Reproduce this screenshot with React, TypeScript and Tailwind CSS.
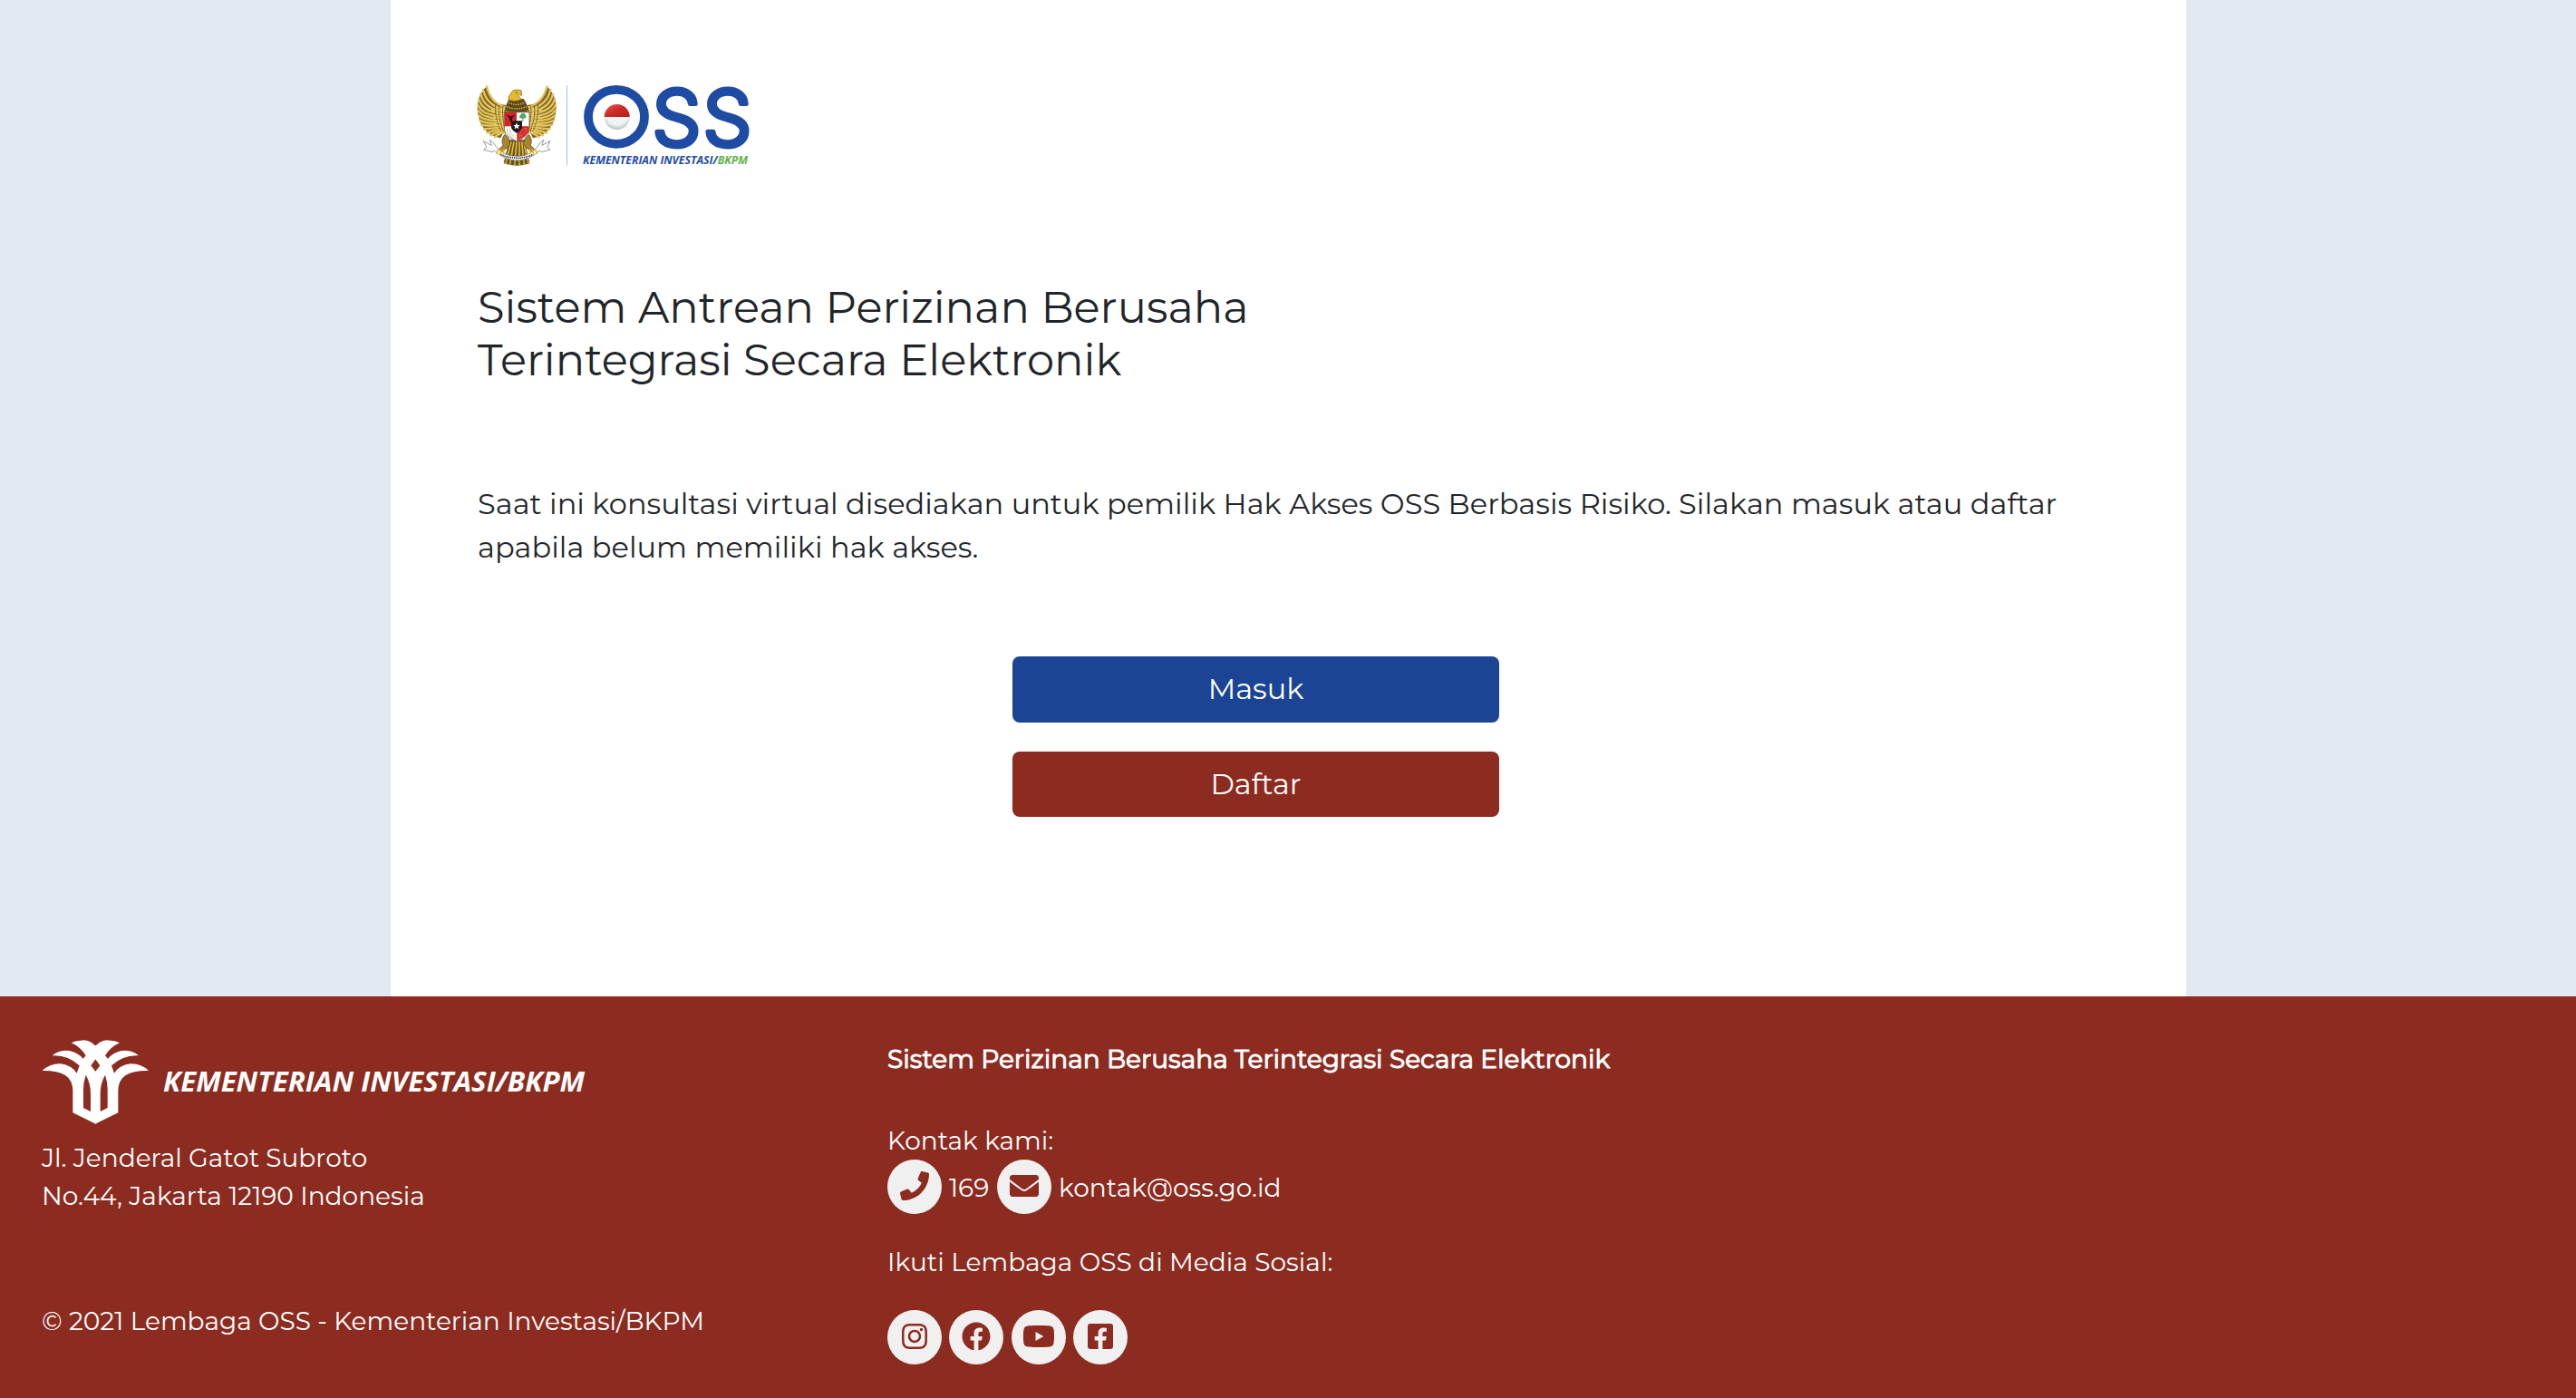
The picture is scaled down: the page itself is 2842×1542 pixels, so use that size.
import type { ReactNode } from "react";
import {
  FaEnvelope,
  FaFacebook,
  FaFacebookSquare,
  FaInstagram,
  FaPhone,
  FaYoutube,
} from "react-icons/fa";

const FEATHERS: [number, number, number, number][] = [
  // tip x, tip y, control x, control y
  [66, 31, 78, 84],
  [54, 42, 66, 96],
  [46, 56, 58, 108],
  [40, 74, 54, 120],
  [37, 92, 54, 132],
  [37, 110, 58, 142],
  [39, 127, 64, 150],
  [43, 143, 70, 158],
  [48, 158, 78, 164],
  [57, 172, 86, 170],
  [67, 184, 94, 176],
  [79, 193, 100, 180],
  [92, 199, 108, 184],
];

function Wing() {
  return (
    <g strokeLinecap="round" fill="none">
      <path
        d="M66 31C40 54 30 90 38 126C46 172 78 196 112 202L134 160L130 92C112 94 80 82 66 31Z"
        fill="#7d682c"
      />
      {FEATHERS.map(([x, y, cx, cy], i) => (
        <path
          key={i}
          d={`M${x} ${y}Q${cx} ${cy} ${126 + (i % 2)} ${100 + i * 7}`}
          stroke="#e6c558"
          strokeWidth="7"
        />
      ))}
      <path d="M88 92Q104 110 124 112M84 108Q100 124 122 124M84 124Q100 138 120 138M88 140Q104 152 124 150M94 156Q108 166 126 162" stroke="#ecd069" strokeWidth="4" />
      <path d="M96 88Q90 128 112 178M108 94Q102 130 122 182M120 96Q114 130 130 184" stroke="#5c4c20" strokeWidth="3" strokeDasharray="3 4" />
    </g>
  );
}

function Garuda() {
  return (
    <g transform="translate(515 85) scale(0.33333)">
      <Wing />
      <g transform="translate(331 0) scale(-1 1)">
        <Wing />
      </g>
      {/* tail */}
      <path d="M140 208L192 208L208 286Q166 300 122 286Z" fill="#6b5620" />
      <path d="M147 214L128 288M156 214L142 291M165 214L158 293M174 214L174 293M182 214L190 291M188 214L204 286" stroke="#e0b83e" strokeWidth="5" />
      <path d="M126 262Q166 276 204 262M122 276Q166 290 208 276" stroke="#4a3b17" strokeWidth="2.5" fill="none" strokeDasharray="3 3" />
      {/* legs */}
      <path d="M126 190Q146 206 142 226L116 248L102 244L120 226Q112 206 126 190Z" fill="#a9862d" stroke="#4a3b17" strokeWidth="2" />
      <path d="M205 190Q185 206 189 226L215 248L229 244L211 226Q219 206 205 190Z" fill="#a9862d" stroke="#4a3b17" strokeWidth="2" />
      {/* breast and head */}
      <path d="M140 72Q126 98 122 128L208 128Q206 98 188 72Z" fill="#5e4b1d" />
      <path d="M138 84Q164 98 192 84M132 98Q164 112 198 98M128 112Q164 124 204 112" stroke="#d9b23b" strokeWidth="4" fill="none" strokeDasharray="5 3" />
      <path d="M138 76Q136 64 144 58Q148 44 162 42L180 44Q184 52 180 62L176 56L170 60Q176 70 182 74Q160 84 138 76Z" fill="#e8b92a" stroke="#6b5620" strokeWidth="2" />
      <circle cx="164" cy="52" r="2.2" fill="#3b2c10" />
      {/* shield */}
      <path d="M124 116H207V172Q206 196 165.500 213Q125 196 124 172Z" fill="#fff" stroke="#333" strokeWidth="2" />
      <path d="M125 117H165V163H125Z" fill="#d8232a" />
      <path d="M166 163H206V172Q204 195 166 211Z" fill="#d8232a" />
      <path d="M134 124Q134 134 141 134Q142 148 146 150Q150 148 151 134Q157 134 158 124Q154 130 146 130Q138 130 134 124Z" fill="#33150f" />
      <path d="M176 136a7 7 0 0 1 2 -11a8 6 0 0 1 16 1a6 6 0 0 1 0 10l-7 1v11h-3v-11Z" fill="#4eaa5c" />
      <path d="M133 170Q134 190 154 202M142 172Q142 186 156 196" stroke="#9ba552" strokeWidth="3" fill="none" strokeDasharray="4 2" />
      <path d="M174 198Q176 176 198 168Q198 186 174 198Z" fill="none" stroke="#e8793c" strokeWidth="2.500" />
      <path d="M147 145H183V166Q181 178 165 185Q149 178 147 166Z" fill="#1c1c1e" />
      <path d="M165 151l3.200 8h8.300l-6.600 5.200l2.500 8.300l-7.400 -5l-7.400 5l2.500 -8.300l-6.600 -5.200h8.300Z" fill="#fff" />
      {/* ribbon */}
      <path d="M55 212L82 226L76 208Q90 216 98 232Q128 264 166 262Q204 264 233 232Q241 216 254 208L249 226L276 212L266 232L276 240L248 248L240 244Q206 276 166 276Q126 276 92 244L84 248L56 240L66 232Z" fill="#fff" stroke="#666" strokeWidth="2" />
      <path d="M112 256Q166 280 220 256" stroke="#333" strokeWidth="5" strokeDasharray="4 2.500" fill="none" />
      {/* claws */}
      <path d="M106 238L98 252M114 242L110 256M122 240L122 254M225 238L233 252M217 242L221 256M209 240L209 254" stroke="#e6b62c" strokeWidth="5" strokeLinecap="round" />
    </g>
  );
}

function OssLogo() {
  return (
    <svg viewBox="527 90 308 96" className="block h-[96px] w-[308px] overflow-visible" role="img">
      <defs>
        <linearGradient id="ballRed" x1="0" y1="0" x2="1" y2="1">
          <stop offset="0" stopColor="#e05a50" />
          <stop offset="0.5" stopColor="#cb2a26" />
          <stop offset="1" stopColor="#b31f1f" />
        </linearGradient>
        <radialGradient id="ballWhite" cx="0.5" cy="0.35" r="0.65">
          <stop offset="0.7" stopColor="#f1f4f4" />
          <stop offset="1" stopColor="#b9bfc0" />
        </radialGradient>
      </defs>
      <Garuda />
      <path d="M625.500 94V182.500" stroke="#a9bfdc" strokeWidth="1" />
      <ellipse cx="680" cy="128.800" rx="31" ry="30" fill="none" stroke="#1f4ca3" strokeWidth="9.800" />
      <circle cx="680.700" cy="129" r="14" fill="url(#ballWhite)" />
      <path d="M666.700 129a14 14 0 0 1 28 0Z" fill="url(#ballRed)" />
      <g
        fill="#1f4ca3"
        stroke="#1f4ca3"
        strokeWidth="5"
        strokeLinejoin="round"
        className="font-['Inter'] text-[85px] font-light"
      >
        <text x="719.500" y="160.500" textLength="54" lengthAdjust="spacingAndGlyphs">S</text>
        <text x="775.500" y="160.500" textLength="54" lengthAdjust="spacingAndGlyphs">S</text>
      </g>
      <text
        x="643"
        y="181"
        textLength="182"
        lengthAdjust="spacingAndGlyphs"
        fill="#1f4ca3"
        className="font-['Open_Sans'] text-[12px] font-bold italic"
      >
        KEMENTERIAN INVESTASI/<tspan fill="#62b34b">BKPM</tspan>
      </text>
    </svg>
  );
}

function PalmHalf() {
  return (
    <path d="M197 41L182 29Q166 18 146 23Q128 23 116 31Q146 44 164 73L155 83Q136 62 110 57Q76 54 53 73Q104 70 143 106L134 131Q116 105 82 100Q46 98 20 123Q70 122 96 138Q121 154 121 190V262L197 299V127L181 106L197 84ZM164 137Q180 164 180 200V258L156 246V185Q156 160 164 137Z" />
  );
}

function MinistryLogo() {
  return (
    <svg viewBox="46 1146 606 95" className="block h-[95px] w-[606px]" role="img">
      <g transform="translate(40 1140) scale(0.33333)" fill="#fff" fillRule="evenodd">
        <PalmHalf />
        <g transform="translate(392 0) scale(-1 1)">
          <PalmHalf />
        </g>
      </g>
      <text
        x="180"
        y="1203.500"
        textLength="465"
        lengthAdjust="spacingAndGlyphs"
        fill="#fff"
        className="font-['Open_Sans'] text-[30px] font-bold italic"
      >
        KEMENTERIAN INVESTASI/BKPM
      </text>
    </svg>
  );
}

function Disc({ children }: { children: ReactNode }) {
  return (
    <span className="flex size-[60px] shrink-0 items-center justify-center rounded-full bg-[#f0f0f0] pb-[2px] text-[#8c2b20]">
      {children}
    </span>
  );
}

export default function App() {
  return (
    <div className="flex h-[1542px] w-[2842px] flex-col overflow-hidden bg-[#e2e9f1] font-['Montserrat','Inter',sans-serif] font-normal text-[#212529]">
      <main className="ml-[431px] h-[1099px] w-[1981px] bg-white pt-[90px] pl-[96px]">
        <OssLogo />
        <h1 className="mt-[124px] text-[48px] leading-[58px] whitespace-nowrap">
          Sistem Antrean Perizinan Berusaha
          <br />
          Terintegrasi Secara Elektronik
        </h1>
        <p className="mt-[106px] text-[32px] leading-[48px] tracking-[0.035px] whitespace-nowrap">
          Saat ini konsultasi virtual disediakan untuk pemilik Hak Akses OSS Berbasis Risiko. Silakan masuk atau daftar
          <br />
          apabila belum memiliki hak akses.
        </p>
        <div className="mt-[96px] ml-[590px] flex w-[537px] flex-col gap-8 text-[32px] text-white">
          <button className="flex h-[73px] items-center justify-center rounded-lg bg-[#1b4594] pb-[2px]">Masuk</button>
          <button className="flex h-[72px] items-center justify-center rounded-lg bg-[#8c2b20]">Daftar</button>
        </div>
      </main>

      <footer className="flex h-[443px] bg-[#8c2b20] pl-[46px] text-[28px] leading-[42px] whitespace-nowrap text-white">
        <div className="flex w-[933px] flex-col items-start pt-[47px]">
          <MinistryLogo />
          <address className="mt-[15px] not-italic">
            Jl. Jenderal Gatot Subroto
            <br />
            No.44, Jakarta 12190 Indonesia
          </address>
          <span className="mt-[96px]">© 2021 Lembaga OSS - Kementerian Investasi/BKPM</span>
        </div>
        <div className="flex flex-col items-start pt-[48px]">
          <strong className="font-normal [-webkit-text-stroke:1px_white]">
            Sistem Perizinan Berusaha Terintegrasi Secara Elektronik
          </strong>
          <span className="mt-[48px]">Kontak kami:</span>
          <div className="flex items-center">
            <Disc>
              <FaPhone className="size-8" />
            </Disc>
            <span className="w-[61px] pt-[2px] pl-2">169</span>
            <Disc>
              <FaEnvelope className="size-8" />
            </Disc>
            <span className="ml-2 pt-[2px] tracking-[0.05px]">kontak@oss.go.id</span>
          </div>
          <span className="mt-[32px] tracking-[0.03px]">Ikuti Lembaga OSS di Media Sosial:</span>
          <div className="mt-[32px] flex gap-[8.300px]">
            <Disc>
              <FaInstagram className="size-8" />
            </Disc>
            <Disc>
              <FaFacebook className="size-8" />
            </Disc>
            <Disc>
              <FaYoutube className="h-8 w-9" />
            </Disc>
            <Disc>
              <FaFacebookSquare className="size-8" />
            </Disc>
          </div>
        </div>
      </footer>
    </div>
  );
}
